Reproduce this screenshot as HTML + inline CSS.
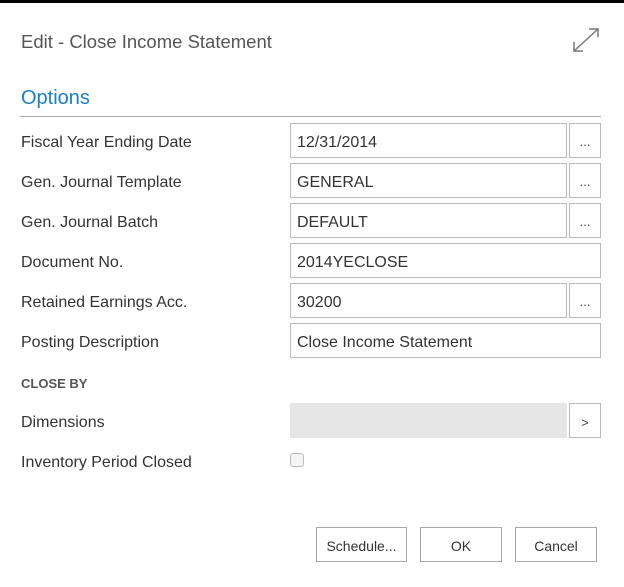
<!DOCTYPE html>
<html><head><style>
body{margin:0;width:624px;height:587px;background:#fff;font-family:"Liberation Sans",sans-serif;position:relative;overflow:hidden;color:#333}
.bar{position:absolute;left:0;top:0;width:624px;height:3px;background:#000}
.a{position:absolute;white-space:nowrap}
.lbl{position:absolute;left:21px;font-size:16px;color:#333;line-height:20px}
.in{position:absolute;left:290px;height:35px;border:1px solid #bbb;box-sizing:border-box;font-size:16px;line-height:37px;padding-left:6px;color:#333}
.btn{position:absolute;left:569px;width:32px;height:35px;border:1px solid #bbb;box-sizing:border-box;font-size:13px;text-align:center;line-height:35px;color:#444}
.b{position:absolute;top:527px;height:35px;border:1px solid #aaa;box-sizing:border-box;font-size:14px;text-align:center;line-height:37px;color:#333;background:#fff}
</style></head><body>
<div class="bar"></div>
<div class="a" style="left:21px;top:31px;font-size:18.5px;color:#555">Edit - Close Income Statement</div>
<svg class="a" style="left:571px;top:27px" width="30" height="26" viewBox="0 0 30 26"><g stroke="#777" stroke-width="1.5" fill="none"><path d="M3 24 L27 2"/><path d="M18 2 H27 V10"/><path d="M3 15 V24 H12"/></g></svg>
<div class="a" style="left:21px;top:87px;font-size:20px;color:#1a7fc8">Options</div>
<div class="a" style="left:20px;top:116px;width:581px;height:1px;background:#aaa"></div>

<div class="lbl" style="top:133px">Fiscal Year Ending Date</div>
<div class="in" style="top:123px;width:277px">12/31/2014</div><div class="btn" style="top:123px">...</div>
<div class="lbl" style="top:173px">Gen. Journal Template</div>
<div class="in" style="top:163px;width:277px">GENERAL</div><div class="btn" style="top:163px">...</div>
<div class="lbl" style="top:213px">Gen. Journal Batch</div>
<div class="in" style="top:203px;width:277px">DEFAULT</div><div class="btn" style="top:203px">...</div>
<div class="lbl" style="top:253px">Document No.</div>
<div class="in" style="top:243px;width:311px">2014YECLOSE</div>
<div class="lbl" style="top:293px">Retained Earnings Acc.</div>
<div class="in" style="top:283px;width:277px">30200</div><div class="btn" style="top:283px">...</div>
<div class="lbl" style="top:333px">Posting Description</div>
<div class="in" style="top:323px;width:311px">Close Income Statement</div>

<div class="a" style="left:21px;top:376px;font-size:13px;font-weight:bold;color:#555">CLOSE BY</div>
<div class="lbl" style="top:413px">Dimensions</div>
<div class="a" style="left:290px;top:403px;width:277px;height:35px;background:#e6e6e6"></div>
<div class="btn" style="top:403px;line-height:37px">&gt;</div>
<div class="lbl" style="top:453px">Inventory Period Closed</div>
<div class="a" style="left:290px;top:453px;width:12px;height:12px;border:1px solid #bbb;border-radius:3px;background:#f4f4f4"></div>

<div class="b" style="left:316px;width:91px">Schedule...</div>
<div class="b" style="left:420px;width:82px">OK</div>
<div class="b" style="left:515px;width:82px">Cancel</div>
</body></html>
